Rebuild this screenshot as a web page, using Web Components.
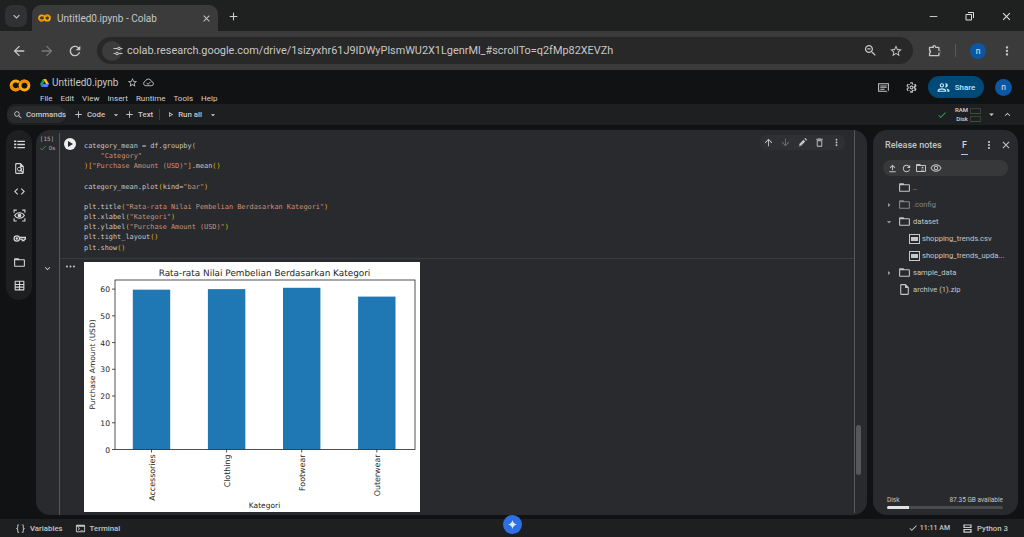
<!DOCTYPE html>
<html lang="en">
<head>
<meta charset="utf-8">
<title>Untitled0.ipynb - Colab</title>
<style>
  html, body { margin: 0; height: 100%; background: #111213; overflow: hidden; }
  body { display: flex; flex-direction: column; width: 1024px; height: 537px; font-family: Roboto, "Liberation Sans", sans-serif; color: #e3e3e3; }
</style>
</head>
<body>
<browser-chrome></browser-chrome>
<colab-header></colab-header>
<colab-toolbar></colab-toolbar>
<colab-main>
  <side-rail slot="rail"></side-rail>
  <code-cell slot="cell"><bar-chart></bar-chart></code-cell>
  <file-panel slot="files">
    <tree-row icon="folder">..</tree-row>
    <tree-row icon="folder" caret="right" dim>.config</tree-row>
    <tree-row icon="folder" caret="down">dataset</tree-row>
    <tree-row icon="csv" indent>shopping_trends.csv</tree-row>
    <tree-row icon="csv" indent>shopping_trends_upda...</tree-row>
    <tree-row icon="folder" caret="right">sample_data</tree-row>
    <tree-row icon="file">archive (1).zip</tree-row>
  </file-panel>
</colab-main>
<status-bar></status-bar>

<script>
const ICONS = {
  back: 'M20 11H7.83l5.59-5.59L12 4l-8 8 8 8 1.41-1.41L7.83 13H20v-2z',
  forward: 'M12 4l-1.41 1.41L16.17 11H4v2h12.17l-5.58 5.59L12 20l8-8z',
  up: 'M4 12l1.41 1.41L11 7.83V20h2V7.83l5.58 5.59L20 12l-8-8z',
  down: 'M20 12l-1.41-1.41L13 16.17V4h-2v12.17l-5.58-5.59L4 12l8 8z',
  refresh: 'M17.65 6.35C16.2 4.9 14.21 4 12 4c-4.42 0-7.99 3.58-7.99 8s3.57 8 7.99 8c3.73 0 6.84-2.55 7.73-6h-2.08c-.82 2.33-3.04 4-5.65 4-3.31 0-6-2.69-6-6s2.69-6 6-6c1.66 0 3.14.69 4.22 1.78L13 11h7V4l-2.35 2.35z',
  close: 'M19 6.41L17.59 5 12 10.59 6.41 5 5 6.41 10.59 12 5 17.59 6.41 19 12 13.41 17.59 19 19 17.59 13.41 12z',
  add: 'M19 13h-6v6h-2v-6H5v-2h6V5h2v6h6v2z',
  star: 'M22 9.24l-7.19-.62L12 2 9.19 8.63 2 9.24l5.46 4.73L5.82 21 12 17.27 18.18 21l-1.63-7.03L22 9.24zM12 15.4l-3.76 2.27 1-4.28-3.32-2.88 4.38-.38L12 6.1l1.71 4.04 4.38.38-3.32 2.88 1 4.28L12 15.4z',
  search: 'M15.5 14h-.79l-.28-.27C15.41 12.59 16 11.11 16 9.5 16 5.91 13.09 3 9.5 3S3 5.91 3 9.5 5.91 16 9.5 16c1.61 0 3.09-.59 4.23-1.57l.27.28v.79l5 4.99L20.49 19l-4.99-5zm-6 0C7.01 14 5 11.99 5 9.5S7.01 5 9.5 5 14 7.01 14 9.5 11.99 14 9.5 14z',
  zoom: 'M15.5 14h-.79l-.28-.27C15.41 12.59 16 11.11 16 9.5 16 5.91 13.09 3 9.5 3S3 5.91 3 9.5 5.91 16 9.5 16c1.61 0 3.09-.59 4.23-1.57l.27.28v.79l5 4.99L20.49 19l-4.99-5zm-6 0C7.01 14 5 11.99 5 9.5S7.01 5 9.5 5 14 7.01 14 9.5 11.99 14 9.5 14zM7 8.5h5v2H7z',
  dots: 'M12 8c1.1 0 2-.9 2-2s-.9-2-2-2-2 .9-2 2 .9 2 2 2zm0 2c-1.1 0-2 .9-2 2s.9 2 2 2 2-.9 2-2-.9-2-2-2zm0 6c-1.1 0-2 .9-2 2s.9 2 2 2 2-.9 2-2-.9-2-2-2z',
  folder: 'M20 6h-8l-2-2H4c-1.1 0-1.99.9-1.99 2L2 18c0 1.1.9 2 2 2h16c1.1 0 2-.9 2-2V8c0-1.1-.9-2-2-2zm0 12H4V8h16v10z',
  file: 'M14 2H6c-1.1 0-1.99.9-1.99 2L4 20c0 1.1.89 2 1.99 2H18c1.1 0 2-.9 2-2V8l-6-6zM6 20V4h7v5h5v11H6z',
  check: 'M9 16.17L4.83 12l-1.42 1.41L9 19 21 7l-1.41-1.41z',
  upload: 'M5 20h14v-2H5v2zm7-16l-6 6 1.41 1.41L11 7.83V16h2V7.83l3.59 3.58L18 10z',
  eye: 'M12 6.5c3.8 0 7.2 2.1 8.8 5.5-1.6 3.4-5 5.5-8.8 5.5S4.8 15.400 3.200 12C4.800 8.600 8.200 6.500 12 6.500zM12 4.500C7 4.500 2.730 7.610 1 12c1.730 4.390 6 7.500 11 7.500s9.270-3.110 11-7.500C21.270 7.610 17 4.500 12 4.500zm0 5a2.500 2.500 0 1 1 0 5 2.500 2.500 0 0 1 0-5zm0-2a4.500 4.500 0 1 0 0 9 4.500 4.500 0 0 0 0-9z',
  toc: 'M8 5h14v2.500H8zm0 5.750h14v2.500H8zM8 16.500h14V19H8zM2 4.500h4v3H2zm0 5.750h4v3H2zM2 16h4v3H2z',
  code: 'M9.400 16.600L4.800 12l4.600-4.600L8 6l-6 6 6 6 1.400-1.400zm5.200 0l4.600-4.600-4.600-4.600L16 6l6 6-6 6-1.400-1.400z',
  table: 'M4 3h16a1 1 0 0 1 1 1v16a1 1 0 0 1-1 1H4a1 1 0 0 1-1-1V4a1 1 0 0 1 1-1zm1 2v4h6V5zm8 0v4h6V5zM5 11v3h6v-3zm8 0v3h6v-3zM5 16v3h6v-3zm8 0v3h6v-3z',
  docsearch: 'M14 2H6a2 2 0 0 0-2 2v16a2 2 0 0 0 2 2h12a2 2 0 0 0 2-2V8zM6 20V4h7v5h5v8.600l-2-2A4.500 4.500 0 1 0 14.600 17l3 3zm5.500-4.500a2.500 2.500 0 1 1 0-5 2.500 2.500 0 0 1 0 5z',
  comment: 'M2 4h20v14h-4v3H19V20H2zm2 2v12h16V6zm2 2.500h12v1.500H6zm0 3h12V13H6zm0 3h8V16H6z',
  gear: 'M19.140 12.940c.04-.3.06-.61.06-.94 0-.32-.02-.64-.07-.94l2.030-1.580c.18-.14.23-.41.12-.61l-1.920-3.320c-.12-.22-.37-.29-.59-.22l-2.390.96c-.5-.38-1.030-.7-1.620-.94l-.36-2.540c-.04-.24-.24-.41-.48-.41h-3.840c-.24 0-.43.17-.47.41l-.36 2.540c-.59.24-1.130.57-1.620.94l-2.390-.96c-.22-.08-.47 0-.59.22L2.740 8.870c-.12.21-.08.47.12.61l2.030 1.580c-.05.3-.09.63-.09.94s.02.64.07.94l-2.030 1.580c-.18.14-.23.41-.12.61l1.920 3.320c.12.22.37.29.59.22l2.390-.96c.5.38 1.030.7 1.620.94l.36 2.540c.05.24.24.41.48.41h3.840c.24 0 .44-.17.47-.41l.36-2.540c.59-.24 1.130-.56 1.620-.94l2.390.96c.22.08.47 0 .59-.22l1.920-3.320c.12-.22.07-.47-.12-.61l-2.010-1.580zM12 19.500l-2.500-1-1-2-2.300.9-1.200-2.100 1.900-1.500v-3.600L5 9.200l1.200-2.100 2.300.9 1-2 .4-1.800h2.200l.4 1.800 2 1 2.300-.9 1.200 2.100-1.900 1.500v3.600l1.900 1.500-1.200 2.100-2.300-.9-2 1-.4 1.800zM12 8.400a3.600 3.600 0 1 0 0 7.200 3.600 3.600 0 0 0 0-7.200zm0 2a1.600 1.600 0 1 1 0 3.200 1.600 1.600 0 0 1 0-3.200z',
  people: 'M9 4a4 4 0 1 1 0 8 4 4 0 0 1 0-8zm0 2a2 2 0 1 0 0 4 2 2 0 0 0 0-4zm7-2a4 4 0 0 1 0 8l-1-.200A6 6 0 0 0 15 4.200zM1 20v-2.500C1 15 6 13.500 9 13.500s8 1.500 8 4V20zm2-2h12c-.4-1-3.500-2.500-6-2.500S3.400 17 3 18zm16 2v-2.500c0-1.500-.8-2.700-2-3.500 3 .4 6 1.800 6 3.500V20z',
  braces: 'M9 3H7a2 2 0 0 0-2 2v4a2 2 0 0 1-2 2v2a2 2 0 0 1 2 2v4a2 2 0 0 0 2 2h2v-2H7v-5a2 2 0 0 0-1.500-2A2 2 0 0 0 7 10V5h2zm6 0h2a2 2 0 0 1 2 2v4a2 2 0 0 0 2 2v2a2 2 0 0 0-2 2v4a2 2 0 0 1-2 2h-2v-2h2v-5a2 2 0 0 1 1.500-2A2 2 0 0 1 17 10V5h-2z',
  terminal: 'M20 4H4a2 2 0 0 0-2 2v12a2 2 0 0 0 2 2h16a2 2 0 0 0 2-2V6a2 2 0 0 0-2-2zm0 14H4V8h16zM6 10l1.200-1.200 3.700 3.700-3.700 3.700L6 15l2.500-2.500zm6 5h6v1.500h-6z',
  server: 'M3 3h18v8H3zm3 2.500v3h12v-3zM3 13h18v8H3zm3 2.500v3h12v-3z',
  edit: 'M14 6l4 4-9 9H5v-4zm2-2l2-2 4 4-2 2zM3 21h4v1H3z',
  trash: 'M6 19a2 2 0 0 0 2 2h8a2 2 0 0 0 2-2V7H6zM8 9h8v10H8zM15.500 4l-1-1h-5l-1 1H5v2h14V4z',
  newfolder: 'M20 6h-8l-2-2H4a2 2 0 0 0-2 2v12a2 2 0 0 0 2 2h16a2 2 0 0 0 2-2V8a2 2 0 0 0-2-2zm0 12H4V8h16zm-8-1h6v-1.500h-6zm3-8 3 3.500h-6z',
  arrowdrop: 'M7 10l5 5 5-5z',
  arrowright: 'M10 7l5 5-5 5z',
  chevdown: 'M16.590 8.590L12 13.170 7.410 8.590 6 10l6 6 6-6z',
  chevup: 'M12 8l-6 6 1.410 1.410L12 10.830l4.590 4.580L18 14z',
  minimize: 'M5 11.200h14v1.600H5z',
  restore: 'M8 4h10a2 2 0 0 1 2 2v10h-2V6H8zM5 8h9a2 2 0 0 1 2 2v9a2 2 0 0 1-2 2H5a2 2 0 0 1-2-2v-9a2 2 0 0 1 2-2zm0 2v9h9v-9z',
  extension: 'M4 6h4.500a3 3 0 0 1 6 0H19a1 1 0 0 1 1 1v4.200a3 3 0 0 1 0 5.600V20a1 1 0 0 1-1 1H4a1 1 0 0 1-1-1v-3.500a3 3 0 0 0 0-4.500V7a1 1 0 0 1 1-1zm1 2v2.800a4.500 4.500 0 0 1 0 6.400V19h13v-3.500h2a1.300 1.300 0 0 0 0-3h-2V8h-5V6a1 1 0 0 0-2 0v2z',
  tune: 'M3 6h8v2H3zm11-2.500a3.500 3.500 0 0 1 0 7 3.500 3.500 0 0 1 0-7zm0 2a1.500 1.500 0 1 0 0 3 1.500 1.500 0 0 0 0-3zM17 6h4v2h-4zM13 16h8v2h-8zm-3-2.500a3.500 3.500 0 0 1 0 7 3.500 3.500 0 0 1 0-7zm0 2a1.500 1.500 0 1 0 0 3 1.500 1.500 0 0 0 0-3zM3 16h3v2H3z',
  run: 'M8 5.500l11 6.500-11 6.500zm2 3.500v6l5-3z'
};

class UiIcon extends HTMLElement {
  connectedCallback() {
    const size = this.getAttribute('size') || 12;
    const d = ICONS[this.getAttribute('name')] || '';
    this.attachShadow({ mode: 'open' }).innerHTML = `
      <style>:host{display:inline-flex;flex:none;width:${size}px;height:${size}px;line-height:0} svg{width:100%;height:100%;fill:currentColor}</style>
      <svg viewBox="0 0 24 24"><path fill-rule="evenodd" d="${d}"/></svg>`;
  }
}
customElements.define('ui-icon', UiIcon);

// two interlocking rings, the left one open towards the right
const coLogo = (w, h) => `<svg width="${w}" height="${h}" viewBox="0 0 36 22" fill="none" stroke-width="5">
  <circle cx="25.500" cy="11" r="7.500" stroke="#f9ab00"/>
  <path d="M32.500 8.300A7.500 7.500 0 0 0 19.500 6.500" stroke="#f08a00"/>
  <path d="M16.200 6.200A7.500 7.500 0 1 0 16.200 15.800" stroke="#f9ab00"/>
  <path d="M16.200 15.800A7.500 7.500 0 0 1 3.300 11" stroke="#f08a00"/>
</svg>`;

class BrowserChrome extends HTMLElement {
  constructor() {
    super();
    this.attachShadow({ mode: 'open' }).innerHTML = `
      <style>
        :host { display: block; flex: none; color: #c7c7c7; font-family: Roboto, "Liberation Sans", sans-serif; }
        .strip { height: 31px; background: #1f2020; display: flex; align-items: flex-end; padding-left: 5px; box-sizing: border-box; }
        .tablist { width: 22px; height: 22px; border-radius: 7px; background: #2f3133; display: flex; align-items: center; justify-content: center; margin: 0 5px 4px 0; }
        .tab { width: 186px; height: 26px; background: #3b3b3b; border-radius: 9px 9px 0 0; display: flex; align-items: center; padding: 0 6px; box-sizing: border-box; gap: 6px; font-size: 10px; color: #c4c7c5; }
        .tab .t { flex: 1; white-space: nowrap; }
        .new { margin: 0 0 8px 9px; color: #d0d0d0; display: flex; }
        .win { margin: 0 11px 8px auto; display: flex; gap: 24px; color: #e0e0e0; }
        .bar { height: 39px; background: #3b3b3b; display: flex; align-items: center; box-sizing: border-box; padding-left: 11px; }
        .nav { display: flex; gap: 12px; align-items: center; width: 86px; }
        .omni { width: 816px; height: 27px; border-radius: 14px; background: #282828; display: flex; align-items: center; box-sizing: border-box; padding: 0 10px 0 5px; font-size: 10.900px; color: #c7c7c7; }
        .site { width: 20px; height: 20px; border-radius: 50%; background: #3c3c3c; display: flex; align-items: center; justify-content: center; margin-right: 5px; }
        .url { flex: 1; white-space: nowrap; }
        .omni ui-icon:last-child { margin: 0 0 0 11px; }
        .tools { display: flex; align-items: center; padding-left: 14px; }
        .sep { width: 1px; height: 13px; background: #5a5a5a; margin: 0 14px 0 13px; }
        .ava { width: 16px; height: 16px; border-radius: 50%; background: #0b57a4; font-size: 8.500px; color: #e6e6e6; display: flex; align-items: center; justify-content: center; margin-right: 14px; }
      </style>
      <div class="strip">
        <div class="tablist"><ui-icon name="chevdown" size="13"></ui-icon></div>
        <div class="tab">
          <span style="display:flex">${coLogo(13, 8)}</span>
          <span class="t">Untitled0.ipynb - Colab</span>
          <ui-icon name="close" size="11"></ui-icon>
        </div>
        <div class="new"><ui-icon name="add" size="13"></ui-icon></div>
        <div class="win">
          <ui-icon name="minimize" size="13"></ui-icon>
          <ui-icon name="restore" size="12"></ui-icon>
          <ui-icon name="close" size="13"></ui-icon>
        </div>
      </div>
      <div class="bar">
        <div class="nav">
          <ui-icon name="back" size="16"></ui-icon>
          <ui-icon name="forward" size="16" style="color:#7a7a7a"></ui-icon>
          <ui-icon name="refresh" size="16"></ui-icon>
        </div>
        <div class="omni">
          <span class="site"><ui-icon name="tune" size="12"></ui-icon></span>
          <span class="url">colab.research.google.com/drive/1sizyxhr61J9IDWyPlsmWU2X1LgenrMl_#scrollTo=q2fMp82XEVZh</span>
          <ui-icon name="zoom" size="15"></ui-icon>
          <ui-icon name="star" size="14"></ui-icon>
        </div>
        <div class="tools">
          <ui-icon name="extension" size="15"></ui-icon>
          <span class="sep"></span>
          <span class="ava">n</span>
          <ui-icon name="dots" size="14"></ui-icon>
        </div>
      </div>`;
  }
}
customElements.define('browser-chrome', BrowserChrome);

class ColabHeader extends HTMLElement {
  constructor() {
    super();
    this.attachShadow({ mode: 'open' }).innerHTML = `
      <style>
        :host { display: flex; flex: none; height: 34px; background: #111213; align-items: flex-start; box-sizing: border-box; padding-left: 9px; color: #c4c7c5; }
        .logo { margin-top: 9px; display: flex; width: 31px; flex: none; }
        .meta { flex: 1; padding-top: 5px; }
        .name { display: flex; align-items: center; height: 15px; font-size: 10px; color: #c4c7c5; }
        .name .txt { margin: 0 9px 0 3px; }
        .name ui-icon { margin-right: 5px; }
        .menu { display: flex; gap: 8px; font-size: 8px; font-weight: 400; margin-top: 4px; color: #d0d0d0; }
        .right { display: flex; align-items: center; height: 28px; margin-top: 3px; padding-right: 12px; }
        .share { width: 56px; height: 22px; border-radius: 11px; background: #004a77; color: #c2e7ff; display: flex; align-items: center; justify-content: center; gap: 5px; font-size: 8px; font-weight: 500; margin: 0 11px 0 10px; }
        .ava { width: 17px; height: 17px; border-radius: 50%; background: #0b57a4; font-size: 8.500px; display: flex; align-items: center; justify-content: center; color: #dfe8f5; }
      </style>
      <div class="logo">${coLogo(22, 13)}</div>
      <div class="meta">
        <div class="name">
          <svg width="9" height="8" viewBox="0 0 18 16" style="flex:none"><path d="M6 0h6l6 10h-6z" fill="#fbbc04"/><path d="M6 0l3 5-6 11-3-6z" fill="#1a9e5c"/><path d="M6 10h12l-3 6H3z" fill="#4285f4"/></svg>
          <span class="txt">Untitled0.ipynb</span>
          <ui-icon name="star" size="11"></ui-icon>
          <svg width="11" height="9" viewBox="0 0 24 18" fill="none" stroke="currentColor" stroke-width="2" style="flex:none"><path d="M6 16a5 5 0 0 1-1-9.800A7 7 0 0 1 18.500 7 4.500 4.500 0 0 1 18 16zM8 10l3 3 5-5"/></svg>
        </div>
        <div class="menu"><span>File</span><span>Edit</span><span>View</span><span>Insert</span><span>Runtime</span><span>Tools</span><span>Help</span></div>
      </div>
      <div class="right">
        <ui-icon name="comment" size="13" style="margin-right:15px"></ui-icon>
        <ui-icon name="gear" size="13"></ui-icon>
        <div class="share"><ui-icon name="people" size="13"></ui-icon>Share</div>
        <div class="ava">n</div>
      </div>`;
  }
}
customElements.define('colab-header', ColabHeader);

class ToolBtn extends HTMLElement {
  constructor() {
    super();
    this.attachShadow({ mode: 'open' }).innerHTML = `
      <style>
        :host { display: inline-flex; align-items: center; gap: 3px; font-size: 7.800px; font-weight: 500; color: #c8c8c8; white-space: nowrap; }
      </style><slot name="icon"></slot><slot></slot>`;
  }
}
customElements.define('tool-btn', ToolBtn);

class ColabToolbar extends HTMLElement {
  constructor() {
    super();
    this.attachShadow({ mode: 'open' }).innerHTML = `
      <style>
        :host { display: flex; flex: none; height: 21px; align-items: center; background: #1e1f20; border-radius: 7px 0 0 7px; margin-left: 7px; box-sizing: border-box; color: #d0d0d0; }
        .cmd { background: #282a2c; height: 17px; border-radius: 9px; display: flex; align-items: center; width: 59px; box-sizing: border-box; padding-left: 6px; margin-right: 7px; }
        .sep { width: 1px; height: 11px; background: #3d3d3d; margin: 0 6px 0 6px; }
        .right { margin-left: auto; display: flex; align-items: center; padding-right: 11px; }
        .ram { font-size: 6px; font-weight: 500; text-align: right; line-height: 8.500px; margin: 0 2px 0 8px; color: #d8d8d8; }
        .meters { display: flex; flex-direction: column; gap: 2px; margin-right: 5px; }
        .meters i { display: block; width: 11px; height: 6px; border: 1px solid #3b3f3b; border-bottom-color: #2e5a35; box-sizing: border-box; }
      </style>
      <div class="cmd"><tool-btn><ui-icon slot="icon" name="search" size="10"></ui-icon>Commands</tool-btn></div>
      <tool-btn><ui-icon slot="icon" name="add" size="11"></ui-icon>Code</tool-btn>
      <ui-icon name="arrowdrop" size="10" style="margin:0 3px 0 6px"></ui-icon>
      <tool-btn><ui-icon slot="icon" name="add" size="11"></ui-icon>Text</tool-btn>
      <span class="sep"></span>
      <tool-btn><ui-icon slot="icon" name="run" size="9"></ui-icon>Run all</tool-btn>
      <ui-icon name="arrowdrop" size="10" style="margin-left:6px"></ui-icon>
      <div class="right">
        <ui-icon name="check" size="10" style="color:#34a853"></ui-icon>
        <div class="ram">RAM<br>Disk</div>
        <div class="meters"><i></i><i></i></div>
        <ui-icon name="arrowdrop" size="11" style="margin-right:5px"></ui-icon>
        <ui-icon name="chevup" size="11"></ui-icon>
      </div>`;
  }
}
customElements.define('colab-toolbar', ColabToolbar);

class ColabMain extends HTMLElement {
  constructor() {
    super();
    this.attachShadow({ mode: 'open' }).innerHTML = `
      <style>
        :host { display: grid; flex: none; height: 394px; box-sizing: border-box; padding: 5px 6px 4px; grid-template-columns: 26px 831px 145px; column-gap: 4px; }
        ::slotted([slot=files]) { margin-left: 2px; }
      </style>
      <slot name="rail"></slot><slot name="cell"></slot><slot name="files"></slot>`;
  }
}
customElements.define('colab-main', ColabMain);

class SideRail extends HTMLElement {
  constructor() {
    super();
    this.attachShadow({ mode: 'open' }).innerHTML = `
      <style>
        :host { display: flex; flex-direction: column; align-items: center; align-self: start; background: #1e1f20; border-radius: 13px; height: 170px; box-sizing: border-box; padding-top: 8px; gap: 10.500px; color: #d6d6d6; }
      </style>
      <ui-icon name="toc" size="13"></ui-icon>
      <ui-icon name="docsearch" size="13"></ui-icon>
      <ui-icon name="code" size="13"></ui-icon>
      <svg width="13" height="13" viewBox="0 0 24 24" fill="none" stroke="currentColor" stroke-width="2"><path d="M2 7V2h5M17 2h5v5M22 17v5h-5M7 22H2v-5"/><path d="M3 12c2-3.500 5.500-5 9-5s7 1.500 9 5c-2 3.500-5.500 5-9 5s-7-1.500-9-5z"/><circle cx="12" cy="12" r="2.500" fill="currentColor"/></svg>
      <svg width="13" height="13" viewBox="0 0 24 24" fill="none" stroke="currentColor" stroke-width="2.200"><circle cx="7" cy="12" r="5"/><circle cx="7" cy="12" r="1.200"/><path d="M12 9.800h11v3.400h-2.500V16h-3.500v-2.800h-5"/></svg>
      <ui-icon name="folder" size="13"></ui-icon>
      <ui-icon name="table" size="13"></ui-icon>`;
  }
}
customElements.define('side-rail', SideRail);

class CodeCell extends HTMLElement {
  constructor() {
    super();
    const s = t => `<span class="s">${t}</span>`;
    const b = t => `<span class="b">${t}</span>`;
    const code = [
      `category_mean = df.groupby${b('(')}`,
      `    ${s('"Category"')}`,
      `${b(')[')}${s('"Purchase Amount (USD)"')}${b(']')}.mean${b('()')}`,
      ``,
      `category_mean.plot${b('(')}kind=${s('"bar"')}${b(')')}`,
      ``,
      `plt.title${b('(')}${s('"Rata-rata Nilai Pembelian Berdasarkan Kategori"')}${b(')')}`,
      `plt.xlabel${b('(')}${s('"Kategori"')}${b(')')}`,
      `plt.ylabel${b('(')}${s('"Purchase Amount (USD)"')}${b(')')}`,
      `plt.tight_layout${b('()')}`,
      `plt.show${b('()')}`
    ].join('\n');
    this.attachShadow({ mode: 'open' }).innerHTML = `
      <style>
        :host { display: grid; position: relative; grid-template-columns: 24px 24px 1fr 13px; grid-template-rows: 129px 1fr; background: #292a2d; border-radius: 14px; overflow: hidden; color: #c8c8c8; }
        .g { border-right: 1px solid #56575a; margin-top: 3px; display: flex; flex-direction: column; align-items: center; box-sizing: border-box; padding-right: 1px; }
        .g.out { margin-top: 0; padding-top: 4px; }
        .count { font: 6px/7px "DejaVu Sans Mono", monospace; color: #b0b0b0; margin: 2px 0 2px; }
        .time { display: flex; align-items: center; gap: 2px; font: 6px/8px "Liberation Sans", sans-serif; color: #b0b0b0; }
        .play { display: flex; justify-content: center; padding: 8px 4px 0 0; }
        .play span { width: 12px; height: 12px; border-radius: 50%; background: #eee; display: flex; align-items: center; justify-content: center; }
        .play span::after { content: ""; border-left: 5px solid #292a2d; border-top: 3px solid transparent; border-bottom: 3px solid transparent; margin-left: 1px; }
        .top { border-bottom: 1px solid #3a3b3e; grid-column: 2 / 4; display: grid; grid-template-columns: 24px 1fr; }
        pre { margin: 0; padding-top: 11px; font: 6.880px/10.150px "DejaVu Sans Mono", "Liberation Mono", monospace; color: #c9c9c9; }
        .s { color: #ce9178; } .b { color: #e0b400; }
        .dots { display: flex; justify-content: center; padding: 3px 4px 0 0; font-size: 0; }
        .out-body { padding-top: 3px; }
        .side { grid-row: 1 / 3; grid-column: 4; border-left: 1px solid #56575a; margin-bottom: 2px; }
        .tools { position: absolute; left: 724px; top: 5px; width: 85px; height: 15px; border-radius: 6px; background: #2f3033; display: flex; align-items: center; justify-content: space-around; color: #c4c4c4; }
        .thumb { position: absolute; left: 820px; top: 295px; width: 5px; height: 50px; border-radius: 3px; background: #56575a; }
      </style>
      <div class="g">
        <div class="count">[15]</div>
        <div class="time"><ui-icon name="check" size="8" style="color:#34a853"></ui-icon>0s</div>
      </div>
      <div class="top">
        <div class="play"><span></span></div>
        <pre>${code}</pre>
      </div>
      <div class="side"></div>
      <div class="g out"><ui-icon name="chevdown" size="11"></ui-icon></div>
      <div class="dots"><svg width="9" height="9" viewBox="0 0 9 9" fill="#c8c8c8"><circle cx="1" cy="4.500" r="1"/><circle cx="4.500" cy="4.500" r="1"/><circle cx="8" cy="4.500" r="1"/></svg></div>
      <div class="out-body"><slot></slot></div>
      <div class="tools">
        <ui-icon name="up" size="11"></ui-icon>
        <ui-icon name="down" size="11" style="color:#6e6f72"></ui-icon>
        <ui-icon name="edit" size="11"></ui-icon>
        <ui-icon name="trash" size="11"></ui-icon>
        <ui-icon name="dots" size="11"></ui-icon>
      </div>
      <div class="thumb"></div>`;
  }
}
customElements.define('code-cell', CodeCell);

class BarChart extends HTMLElement {
  constructor() {
    super();
    const data = [['Accessories', 59.8], ['Clothing', 60.0], ['Footwear', 60.5], ['Outerwear', 57.2]];
    const x0 = 31, y0 = 187.500, k = 2.673, ink = '#262626';
    let g = '';
    for (let v = 0; v <= 60; v += 10) {
      const y = y0 - v * k;
      g += `<line x1="${x0 - 3}" x2="${x0}" y1="${y}" y2="${y}" stroke="${ink}" stroke-width=".8"/>
            <text x="${x0 - 5}" y="${y + 3}" text-anchor="end" font-size="7.600">${v}</text>`;
    }
    data.forEach(([name, v], i) => {
      const cx = 67.500 + i * 75.100, h = v * k;
      g += `<rect x="${cx - 18.700}" y="${y0 - h}" width="37.400" height="${h}" fill="#1f77b4"/>
            <line x1="${cx}" x2="${cx}" y1="${y0}" y2="${y0 + 3}" stroke="${ink}" stroke-width=".8"/>
            <text transform="translate(${cx + 3} ${y0 + 5}) rotate(-90)" text-anchor="end" font-size="7.900">${name}</text>`;
    });
    this.attachShadow({ mode: 'open' }).innerHTML = `
      <style>:host { display: block; width: 336px; height: 250px; } svg { display: block; background: #fff; font-family: "DejaVu Sans", sans-serif; fill: ${ink}; text-rendering: geometricPrecision; }</style>
      <svg width="336" height="250" viewBox="0 0 336 250">
        ${g}
        <rect x="${x0}" y="18" width="300" height="${y0 - 18}" fill="none" stroke="${ink}" stroke-width=".8"/>
        <text x="180.500" y="14" text-anchor="middle" font-size="8.900">Rata-rata Nilai Pembelian Berdasarkan Kategori</text>
        <text x="180.500" y="246" text-anchor="middle" font-size="7.500">Kategori</text>
        <text transform="translate(10.500 102.500) rotate(-90)" text-anchor="middle" font-size="7.500">Purchase Amount (USD)</text>
      </svg>`;
  }
}
customElements.define('bar-chart', BarChart);

class TreeRow extends HTMLElement {
  constructor() {
    super();
    const sh = this.attachShadow({ mode: 'open' });
    sh.innerHTML = `
      <style>
        :host { display: flex; align-items: center; height: 17px; font-size: 7.600px; color: #c4c7c5; white-space: nowrap; }
        :host([dim]) { color: #85878a; }
        .caret { width: 11px; flex: none; display: flex; justify-content: center; color: #b0b0b0; margin-left: 10px; }
        :host([indent]) .caret { width: 22px; }
        .ic { margin: 0 2px 0 4px; display: flex; }
      </style>
      <span class="caret"></span><span class="ic"></span><slot></slot>`;
  }
  connectedCallback() {
    const caret = this.getAttribute('caret');
    if (caret) this.shadowRoot.querySelector('.caret').innerHTML = `<ui-icon name="${caret === 'down' ? 'arrowdrop' : 'arrowright'}" size="10"></ui-icon>`;
    const icon = this.getAttribute('icon');
    this.shadowRoot.querySelector('.ic').innerHTML = icon === 'csv'
      ? `<svg width="11" height="10" viewBox="0 0 11 10"><rect x=".5" y=".5" width="10" height="9" fill="none" stroke="#c4c7c5"/><rect x="2" y="3" width="7" height="4" fill="#c4c7c5"/></svg>`
      : `<ui-icon name="${icon}" size="13"></ui-icon>`;
  }
}
customElements.define('tree-row', TreeRow);

class FilePanel extends HTMLElement {
  constructor() {
    super();
    this.attachShadow({ mode: 'open' }).innerHTML = `
      <style>
        :host { display: flex; flex-direction: column; background: #292a2d; border-radius: 14px; box-sizing: border-box; padding: 0 6px 0 0; width: 145px; color: #c4c7c5; }
        .head { display: flex; align-items: center; height: 30px; padding-left: 12px; font-size: 9px; font-weight: 500; }
        .head .title { flex: 1; }
        .tab { position: relative; width: 15px; text-align: center; margin-right: 11px; color: #d8d8d8; }
        .tab::after { content: ""; position: absolute; left: 4px; right: 4px; bottom: -5px; height: 1px; background: #a8c7fa; }
        .pill { height: 16px; margin: 0 4px 0 10px; border-radius: 8px; background: #37383a; display: flex; align-items: center; padding-left: 4px; gap: 3px; }
        .tree { padding-top: 3px; flex: 1; }
        .disk { margin: 0 9px 6px 14px; font-size: 6.500px; }
        .disk .row { display: flex; justify-content: space-between; line-height: 8px; }
        .bar { height: 3px; border-radius: 2px; background: #4a4b4e; margin-top: 2px; overflow: hidden; }
        .bar i { display: block; height: 100%; width: 19%; background: #e3e3e3; }
      </style>
      <div class="head">
        <span class="title">Release notes</span>
        <span class="tab">F</span>
        <ui-icon name="dots" size="12" style="margin-right:5px"></ui-icon>
        <ui-icon name="close" size="12"></ui-icon>
      </div>
      <div class="pill">
        <ui-icon name="upload" size="11"></ui-icon>
        <ui-icon name="refresh" size="11"></ui-icon>
        <ui-icon name="newfolder" size="12"></ui-icon>
        <ui-icon name="eye" size="12"></ui-icon>
      </div>
      <div class="tree"><slot></slot></div>
      <div class="disk">
        <div class="row"><span>Disk</span><span>87.35 GB available</span></div>
        <div class="bar"><i></i></div>
      </div>`;
  }
}
customElements.define('file-panel', FilePanel);

class StatusBar extends HTMLElement {
  constructor() {
    super();
    this.attachShadow({ mode: 'open' }).innerHTML = `
      <style>
        :host { display: flex; flex: none; position: relative; height: 18px; background: #1e1f20; align-items: center; box-sizing: border-box; padding: 0 16px 0 15px; font-size: 7.800px; font-weight: 500; color: #c4c7c5; }
        .gem { position: absolute; left: 503px; top: -4px; width: 19px; height: 19px; border-radius: 50%; background: #2f6fe4; display: flex; align-items: center; justify-content: center; }
        .right { margin-left: auto; display: flex; align-items: center; }
        .time { font-size: 7px; }
      </style>
      <ui-icon name="braces" size="11" style="margin-right:4px"></ui-icon>Variables
      <ui-icon name="terminal" size="11" style="margin:0 4px 0 12px"></ui-icon>Terminal
      <div class="gem"><svg width="11" height="11" viewBox="0 0 24 24"><path d="M12 2c1 5.500 4.500 9 10 10-5.500 1-9 4.500-10 10-1-5.500-4.500-9-10-10 5.500-1 9-4.500 10-10z" fill="#dbe7ff"/></svg></div>
      <div class="right">
        <ui-icon name="check" size="10" style="margin-right:2px"></ui-icon><span class="time">11:11 AM</span>
        <ui-icon name="server" size="11" style="margin:0 4px 0 12px"></ui-icon>Python 3
      </div>`;
  }
}
customElements.define('status-bar', StatusBar);
</script>
</body>
</html>
